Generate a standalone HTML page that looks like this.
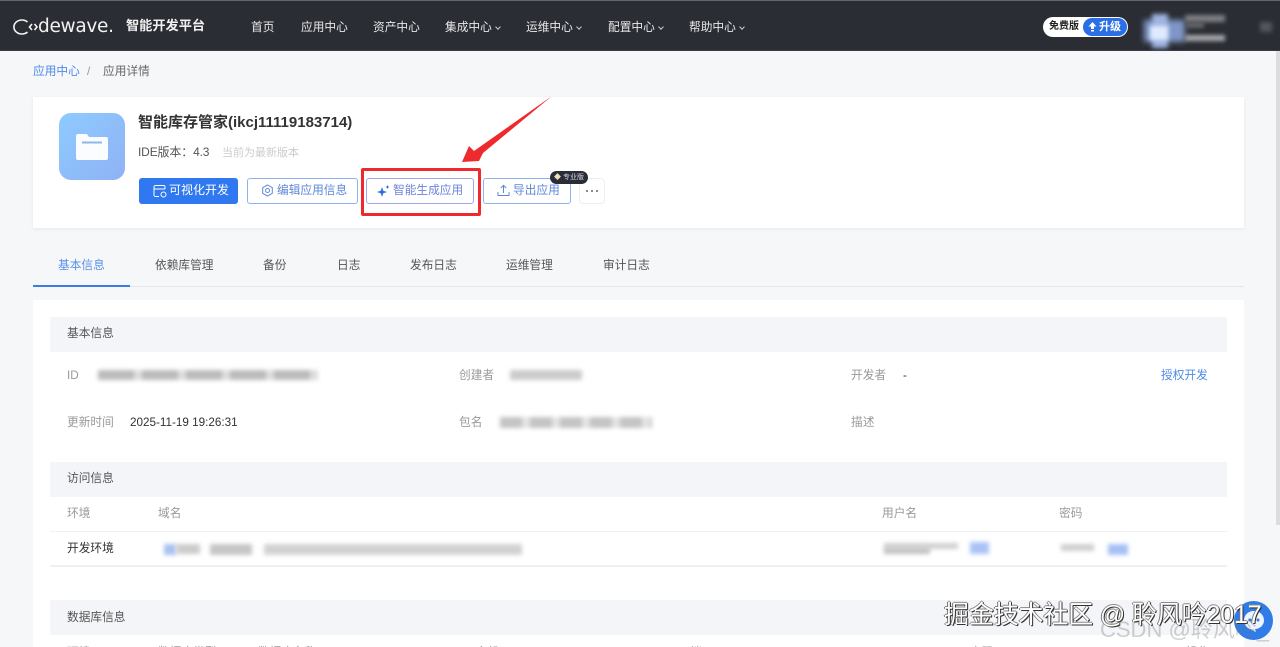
<!DOCTYPE html>
<html lang="zh"><head><meta charset="utf-8"><title>应用详情</title>
<style>
*{box-sizing:border-box;margin:0;padding:0}
html,body{width:1280px;height:647px;overflow:hidden;background:#f6f7f9}
body{position:relative;font-family:"Liberation Sans","Noto Sans CJK SC",sans-serif;font-size:11.7px;color:#555}
.t{position:absolute;white-space:nowrap;line-height:16px}
.t:not(.x){transform:translateY(1px)}
.b{position:absolute}
.nav{color:#e8e8ea;top:19px}
.nav i{display:inline-block;width:4px;height:4px;border-right:1px solid #ccc;border-bottom:1px solid #ccc;transform:rotate(45deg);margin-left:4px;position:relative;top:-2px}
.g{color:#999}
.d{color:#333}
.hd{position:absolute;left:50px;width:1177px;height:35px;background:#f3f5f8}
.ln{position:absolute;left:50px;width:1177px;height:1px;background:#eef0f3}
.btn{position:absolute;top:178px;height:26px;border:1px solid #8fb2ef;border-radius:3px;background:#fff;color:#5d88d8}
.bl{position:absolute;filter:blur(2px)}
.wm{position:absolute;left:944px;top:600px;font-size:25px;line-height:30px;white-space:nowrap;color:#fff;letter-spacing:-.15px;text-shadow:1px 1px 0 #333,-1px 0 0 #777,0 -1px 0 #888,1px 0 0 #555}
</style></head><body>

<div class="b" style="left:0;top:0;width:1280px;height:51px;background:#2b2d34;border-top:1px solid #66676c;border-bottom:1px solid #3a3c44"></div>
<div class="b" style="left:1276px;top:51px;width:4px;height:474px;background:#dcdde0"></div>
<svg class="b" style="left:12px;top:18px" width="34" height="18" viewBox="0 0 34 18" fill="none" stroke="#f4f4f4" stroke-width="1.600"><path d="M15.500 4A8 7 0 1 0 15.500 14"/><path d="M20 6l-2.500 3 2.500 3M22.500 6l2.500 3-2.500 3"/></svg>
<div class="t x" style="left:38px;top:14px;font-family:'DejaVu Sans',sans-serif;font-size:18.500px;line-height:26px;color:#f2f2f2;letter-spacing:-.3px">dewave.</div>
<div class="t x" style="left:126px;top:18px;font-size:13.200px;font-weight:700;color:#f0f0f0">智能开发平台</div>
<div class="t nav" style="left:251px">首页</div>
<div class="t nav" style="left:301px">应用中心</div>
<div class="t nav" style="left:373px">资产中心</div>
<div class="t nav" style="left:445px">集成中心<i></i></div>
<div class="t nav" style="left:526px">运维中心<i></i></div>
<div class="t nav" style="left:608px">配置中心<i></i></div>
<div class="t nav" style="left:689px">帮助中心<i></i></div>

<div class="b" style="left:1043px;top:17px;width:85px;height:20px;background:#fff;border-radius:10px"></div>
<div class="t x" style="left:1049px;top:19px;font-size:10px;color:#222;font-weight:700">免费版</div>
<div class="b" style="left:1083px;top:18px;width:44px;height:18px;background:#2b6fe6;border-radius:9px"></div>
<svg class="b" style="left:1088px;top:22px" width="9" height="10" viewBox="0 0 9 10" fill="#fff"><path d="M4.500 0L8.500 4.500H6V7H3V4.500H.5zM3 8h3v1.500H3z"/></svg>
<div class="t x" style="left:1099px;top:19px;font-size:11px;color:#fff;font-weight:700">升级</div>
<div class="bl" style="left:1144px;top:20px;width:41px;height:22px;background:#7f97c8;filter:blur(3px)"></div>
<div class="bl" style="left:1152px;top:14px;width:16px;height:34px;background:#9fb4e0;filter:blur(2.5px)"></div>
<div class="bl" style="left:1150px;top:26px;width:18px;height:14px;background:#dfeaff;filter:blur(2px)"></div>
<div class="bl" style="left:1185px;top:15px;width:40px;height:7px;background:#7f8085"></div>
<div class="bl" style="left:1186px;top:22px;width:18px;height:6px;background:#66676c"></div>
<div class="bl" style="left:1185px;top:35px;width:40px;height:6px;background:#a9aaae"></div>
<div class="bl" style="left:1260px;top:22px;width:12px;height:10px;background:#55565b"></div>

<div class="t" style="left:33px;top:63px;color:#4f8ae6">应用中心</div>
<div class="t" style="left:87px;top:63px;color:#999">/</div>
<div class="t" style="left:103px;top:63px;color:#666">应用详情</div>

<div class="b" style="left:33px;top:97px;width:1211px;height:131px;background:#fff;box-shadow:0 1px 3px rgba(0,0,0,.07)"></div>
<div class="b" style="left:59px;top:113px;width:66px;height:67px;border-radius:12px;background:linear-gradient(135deg,#8ecbff,#8fb2f5)"></div>
<svg class="b" style="left:76px;top:133px" width="32" height="28" viewBox="0 0 32 28"><path d="M0 3a2 2 0 0 1 2-2h9l2 3h17a2 2 0 0 1 2 2v19a2 2 0 0 1-2 2H2a2 2 0 0 1-2-2z" fill="#fafcff"/><rect x="6" y="8.500" width="20" height="2" fill="#8fb6ea"/></svg>
<div class="t x" style="left:138px;top:113px;font-size:15px;line-height:20px;font-weight:700;color:#333">智能库存管家(ikcj11119183714)</div>
<div class="t x" style="left:138px;top:144px;color:#555;font-size:12px;letter-spacing:-.15px">IDE版本：4.3</div>
<div class="t x" style="left:222px;top:145px;font-size:11px;color:#ccc">当前为最新版本</div>

<div class="b" style="left:139px;top:178px;width:99px;height:26px;background:#2f78f0;border-radius:3px"></div>
<svg class="b" style="left:153px;top:184px" width="14" height="14" viewBox="0 0 14 14" fill="none" stroke="#fff" stroke-width="1"><path d="M12 5V3a1.500 1.500 0 0 0-1.500-1.500h-8A1.500 1.500 0 0 0 1 3v8a1.500 1.500 0 0 0 1.500 1.500H6M1 5h11"/><circle cx="10.500" cy="10.500" r="2.500"/></svg>
<div class="t x" style="left:169px;top:182px;color:#fff;font-size:12px">可视化开发</div>

<div class="btn" style="left:247px;width:111px"></div>
<svg class="b" style="left:261px;top:184px" width="13" height="13" viewBox="0 0 13 13" fill="none" stroke="#5d88d8"><path d="M6.500 1l4.800 2.700v5.600L6.500 12 1.700 9.300V3.700z"/><circle cx="6.500" cy="6.500" r="2"/></svg>
<div class="t" style="left:277px;top:182px;color:#5d88d8">编辑应用信息</div>

<div class="btn" style="left:366px;width:108px;border-color:#9fa8e6"></div>
<svg class="b" style="left:377px;top:184px" width="13" height="13" viewBox="0 0 13 13" fill="#2f6fdc"><path d="M5 3l1.300 3.700L10 8 6.300 9.300 5 13 3.700 9.300 0 8l3.700-1.300zM10.500 1l.6 1.400 1.400.6-1.400.6-.6 1.400-.6-1.400L8.500 3l1.400-.6z"/></svg>
<div class="t" style="left:393px;top:182px;color:#6f85d8">智能生成应用</div>

<div class="btn" style="left:483px;width:88px"></div>
<svg class="b" style="left:497px;top:184px" width="13" height="13" viewBox="0 0 13 13" fill="none" stroke="#5d88d8"><path d="M6.500 9V1.500M3.800 4l2.700-2.700L9.200 4M1 8v3.500h11V8"/></svg>
<div class="t" style="left:513px;top:182px;color:#5d88d8">导出应用</div>
<div class="b" style="left:579px;top:178px;width:26px;height:26px;border:1px solid #eceef2;border-radius:4px;background:#fff"></div>
<div class="b" style="left:550px;top:171px;width:38px;height:13px;background:#2a2c3a;border-radius:7px"></div>
<div class="t x" style="left:554px;top:171px;font-size:7px;line-height:13px;color:#d8d8d8"><span style="color:#f0e2b0">◆</span> 专业版</div>
<div class="b" style="left:586px;top:190px;width:2px;height:2px;border-radius:50%;background:#666;box-shadow:5px 0 0 #666,10px 0 0 #666"></div>

<div class="b" style="left:361px;top:168px;width:120px;height:48px;border:3px solid #ee2a2f;border-radius:2px"></div>
<svg class="b" style="left:455px;top:90px" width="105" height="76" viewBox="455 90 105 76"><path d="M552 96L483 153 479 161 462 162 469 146 474 151Z" fill="#ee2a2f"/></svg>

<div class="b" style="left:33px;top:286px;width:1211px;height:1px;background:#e4e6ea"></div>
<div class="b" style="left:33px;top:285px;width:97px;height:2px;background:#3d7ce0"></div>
<div class="t" style="left:58px;top:257px;color:#5a90ea">基本信息</div>
<div class="t" style="left:155px;top:257px">依赖库管理</div>
<div class="t" style="left:263px;top:257px">备份</div>
<div class="t" style="left:337px;top:257px">日志</div>
<div class="t" style="left:410px;top:257px">发布日志</div>
<div class="t" style="left:506px;top:257px">运维管理</div>
<div class="t" style="left:603px;top:257px">审计日志</div>

<div class="b" style="left:33px;top:300px;width:1211px;height:347px;background:#fff"></div>
<div class="hd" style="top:317px"></div>
<div class="t" style="left:67px;top:325px">基本信息</div>
<div class="t g" style="left:67px;top:367px">ID</div>
<div class="bl" style="left:98px;top:370px;width:220px;height:10px;background:repeating-linear-gradient(90deg,#bbb 0 36px,#ddd 36px 44px)"></div>
<div class="t g" style="left:459px;top:367px">创建者</div>
<div class="bl" style="left:510px;top:370px;width:72px;height:10px;background:#ccc"></div>
<div class="t g" style="left:851px;top:367px">开发者</div>
<div class="t d" style="left:903px;top:367px">-</div>
<div class="t" style="left:1161px;top:367px;color:#4f8ae6">授权开发</div>
<div class="t g" style="left:67px;top:414px">更新时间</div>
<div class="t d" style="left:130px;top:414px">2025-11-19 19:26:31</div>
<div class="t g" style="left:459px;top:414px">包名</div>
<div class="bl" style="left:500px;top:417px;width:152px;height:11px;background:repeating-linear-gradient(90deg,#c4c4c4 0 22px,#e4e4e4 22px 30px)"></div>
<div class="t g" style="left:851px;top:414px">描述</div>

<div class="hd" style="top:462px"></div>
<div class="t" style="left:67px;top:470px">访问信息</div>
<div class="t g" style="left:67px;top:505px">环境</div>
<div class="t g" style="left:158px;top:505px">域名</div>
<div class="t g" style="left:882px;top:505px">用户名</div>
<div class="t g" style="left:1059px;top:505px">密码</div>
<div class="ln" style="top:531px"></div>
<div class="t d" style="left:67px;top:540px">开发环境</div>
<div class="bl" style="left:164px;top:544px;width:12px;height:11px;background:#a9c0f2"></div>
<div class="bl" style="left:176px;top:544px;width:24px;height:10px;background:#ccc"></div>
<div class="bl" style="left:210px;top:544px;width:42px;height:11px;background:#c6c6c6"></div>
<div class="bl" style="left:264px;top:544px;width:258px;height:11px;background:#d2d2d2"></div>
<div class="bl" style="left:884px;top:543px;width:74px;height:6px;background:#d0d0d0"></div>
<div class="bl" style="left:884px;top:548px;width:46px;height:6px;background:#c0c0c0"></div>
<div class="bl" style="left:970px;top:542px;width:19px;height:12px;background:#aac3f5"></div>
<div class="bl" style="left:1061px;top:544px;width:33px;height:7px;background:#cfcfcf"></div>
<div class="bl" style="left:1108px;top:544px;width:20px;height:11px;background:#a6c0f5"></div>
<div class="ln" style="top:565px;height:2px"></div>

<div class="hd" style="top:600px"></div>
<div class="t" style="left:67px;top:609px">数据库信息</div>
<div class="t g" style="left:67px;top:644px">环境</div>
<div class="t g" style="left:158px;top:644px">数据库类型</div>
<div class="t g" style="left:258px;top:644px">数据库名称</div>
<div class="t g" style="left:476px;top:644px">主机</div>
<div class="t g" style="left:690px;top:644px">端口</div>
<div class="t g" style="left:970px;top:644px">密码</div>
<div class="t g" style="left:1186px;top:644px">操作</div>

<div class="b" style="left:1234px;top:601px;width:39px;height:39px;border-radius:50%;background:#2f7ce8"></div>
<svg class="b" style="left:1241px;top:608px" width="26" height="26" viewBox="0 0 26 26"><path d="M13 3C7 3 3 7 3 12.500c0 4 2.500 7 6 8.500l6 3-1-3c5 0 9-4 9-8.500C23 7 19 3 13 3z" fill="#eef4ff"/><circle cx="9" cy="12" r="1.500" fill="#2f7ce8"/><circle cx="17" cy="12" r="1.500" fill="#2f7ce8"/></svg>
<div class="t x" style="left:1100px;top:618px;font-size:22px;line-height:24px;color:rgba(120,120,120,.35)">CSDN @聆风吟_</div>
<div class="wm">掘金技术社区 @ 聆风吟2017</div>
</body></html>
